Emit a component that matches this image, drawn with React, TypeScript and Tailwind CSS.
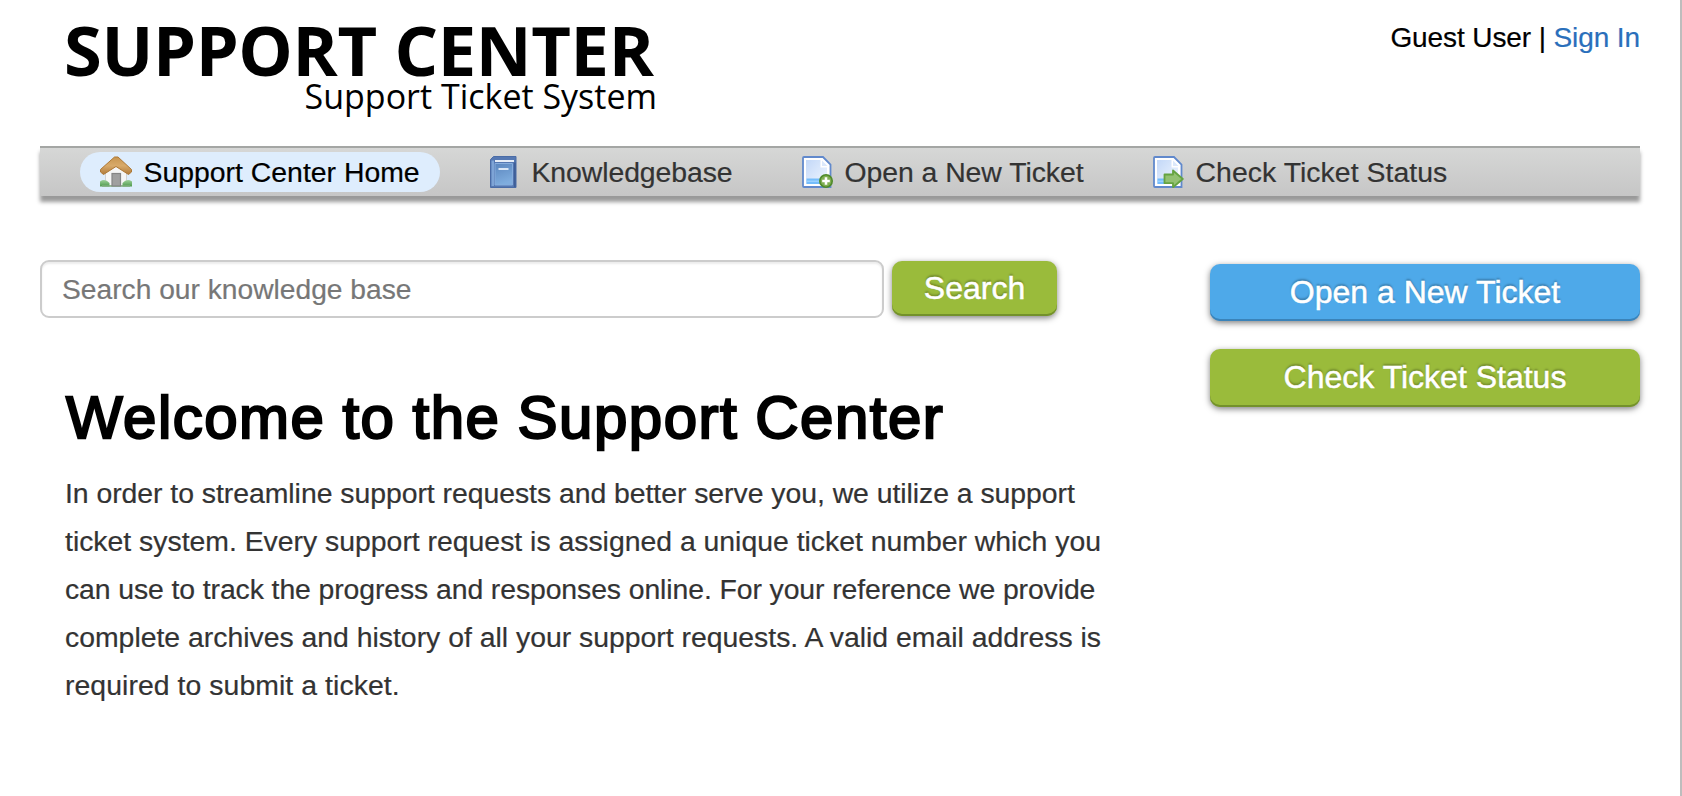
import React from "react";

function HomeIcon() {
  return (
    <svg viewBox="0 0 32 32" className="size-8 shrink-0">
      <defs>
        <linearGradient id="roof" x1="0" y1="0" x2="0" y2="1">
          <stop offset="0" stopColor="#c8954f" />
          <stop offset="0.5" stopColor="#d8aa6a" />
          <stop offset="1" stopColor="#b07a3a" />
        </linearGradient>
        <linearGradient id="grass" x1="0" y1="0" x2="0" y2="1">
          <stop offset="0" stopColor="#9bcf97" />
          <stop offset="1" stopColor="#4f9a4d" />
        </linearGradient>
      </defs>
      <path d="M5.500 15.500L16 7l10.500 8.500v14h-21z" fill="#f6f6f6" stroke="#d2d2d2" strokeWidth="1" />
      <path d="M0 25.500q5-3.500 9.500 1.500v3.500H0zM32 25.500q-5-3.500-9.500 1.500v3.500H32z" fill="url(#grass)" />
      <path d="M2 30h28" stroke="#7fae7c" strokeWidth="1.500" />
      <rect x="12" y="17.500" width="8.500" height="12.500" fill="#a0a0a0" stroke="#858585" strokeWidth="1.200" />
      <path d="M14.500 1h3.500L31.500 13.500v2.500l-3 2.500L16 10.500 3.500 18.500l-3-2.500v-2.500z" fill="url(#roof)" stroke="#ad7836" strokeWidth="1" strokeLinejoin="round" />
    </svg>
  );
}

function BookIcon() {
  return (
    <svg viewBox="0 0 32 32" className="size-8 shrink-0">
      <defs>
        <linearGradient id="cover" x1="0" y1="0" x2="0.300" y2="1">
          <stop offset="0" stopColor="#5b86be" />
          <stop offset="1" stopColor="#7fadde" />
        </linearGradient>
      </defs>
      <path d="M5.500 0.500H28v31H2.500V3.500z" fill="#5578b2" stroke="#4a6ca6" strokeWidth="1" />
      <path d="M3.500 4.500h2.500v25.500H3.500z" fill="#7ea4d6" />
      <path d="M7 4h19v2H7z" fill="#e6edf7" />
      <path d="M7 7.500h17.500v21.500H7z" fill="url(#cover)" stroke="#86acdc" strokeWidth="1" />
      <path d="M10.500 12h10v2h-10z" fill="#dbe7f6" />
      <path d="M26.800 6.500v24.500" stroke="#3f5f98" strokeWidth="1.800" />
    </svg>
  );
}

function PageShape({ id }: { id: string }) {
  return (
    <>
      <defs>
        <linearGradient id={id} x1="0" y1="0" x2="1" y2="1">
          <stop offset="0" stopColor="#c3d8f8" />
          <stop offset="1" stopColor="#f0f6ff" />
        </linearGradient>
      </defs>
      <path d="M3 1h19l7.500 7.500V31H3q-1 0-1-1V2q0-1 1-1z" fill="#fff" stroke="#6189cc" strokeWidth="1.800" />
      <path d="M5 4h14.500v7.500H26v16.500H5z" fill={`url(#${id})`} />
      <path d="M21 4.500l5.500 5.500H21z" fill="#dbe8fb" />
      <path d="M5.500 22.500H24v5.500H5.500z" fill="#74bdfb" />
      <path d="M5.500 25.200H24" stroke="#a5d6ff" strokeWidth="1.200" />
    </>
  );
}

function NewTicketIcon() {
  return (
    <svg viewBox="0 0 32 32" className="size-8 shrink-0">
      <PageShape id="pageNew" />
      <circle cx="25" cy="25" r="6.200" fill="#7fae52" stroke="#4f8a2a" strokeWidth="1.600" />
      <path d="M25 21.200v7.600M21.200 25h7.600" stroke="#fff" strokeWidth="2.600" />
    </svg>
  );
}

function StatusIcon() {
  return (
    <svg viewBox="0 0 32 32" className="size-8 shrink-0">
      <PageShape id="pageStatus" />
      <path d="M12.500 18.500H21v-4l9.800 8.500L21 31.200v-4h-8.500z" fill="#93c172" stroke="#65a341" strokeWidth="1.800" strokeLinejoin="round" />
    </svg>
  );
}

const navItem =
  "flex h-10 items-center gap-[11.5px] rounded-full px-5 whitespace-nowrap text-[28.4px] leading-10";
const button =
  "flex items-center justify-center rounded-[10px] pb-0.5 text-[32px] text-white [text-shadow:0_-2px_2px_rgba(0,0,0,0.25)] [-webkit-text-stroke:0.5px_white]";

export default function App() {
  return (
    <div className="h-[796px] w-[1682px] overflow-hidden border-r-2 border-[#bdbdbd] bg-white px-10 font-['Liberation_Sans',Arial,sans-serif] text-[28px] text-black [-webkit-text-stroke:0.2px_currentColor]">
      <header className="flex h-[146px] items-start justify-between">
        <div className="flex w-[617px] flex-col pt-5 pl-6 font-['Open_Sans',sans-serif] whitespace-nowrap [-webkit-text-stroke:0]">
          <span className="text-[68.6px] leading-[60px] font-bold tracking-[-0.35px]">SUPPORT CENTER</span>
          <span className="self-end text-[34px] leading-[33px]">Support Ticket System</span>
        </div>
        <p className="pt-[22px] leading-8 tracking-[-0.1px]">
          Guest User | <a className="text-[#2a6fbb]">Sign In</a>
        </p>
      </header>

      <nav className="flex h-[50px] gap-7 border-t-2 border-[#a4a6a4] bg-linear-to-b from-[#d6d7d6] to-[#c6c6c6] pt-1 pl-10 text-[#333] shadow-[0_6px_4px_rgba(0,0,0,0.4)]">
        <a className={`${navItem} w-[360px] bg-[#deedfd] text-black`}>
          <HomeIcon />
          Support Center Home
        </a>
        <a className={`${navItem} w-[285px] tracking-[-0.08px]`}>
          <BookIcon />
          Knowledgebase
        </a>
        <a className={`${navItem} w-[323px] tracking-[-0.05px]`}>
          <NewTicketIcon />
          Open a New Ticket
        </a>
        <a className={`${navItem} tracking-[0.05px]`}>
          <StatusIcon />
          Check Ticket Status
        </a>
      </nav>

      <main className="flex justify-between pt-16">
        <section className="w-[1100px]">
          <form className="flex gap-2">
            <input
              className="h-[58px] w-[844px] rounded-[9px] border-2 border-[#ccc] bg-white px-5 text-[28.2px] shadow-[inset_0_2px_2px_rgba(0,0,0,0.075)] placeholder:text-[#777]"
              placeholder="Search our knowledge base"
            />
            <button
              type="button"
              className={`${button} mt-px h-[55px] w-[165px] bg-[#9abb3b] shadow-[inset_0_-2px_0_#73912b,0_2px_6px_rgba(0,0,0,0.5)]`}
            >
              Search
            </button>
          </form>
          <h1 className="mt-[70px] pl-[26px] text-[60px] leading-[60px] tracking-[1.48px] [word-spacing:-1px] whitespace-nowrap [-webkit-text-stroke:2.3px_black]">
            Welcome to the Support Center
          </h1>
          <p className="mt-[21px] flex flex-col pl-[25px] text-[28.4px] leading-[48px] whitespace-nowrap text-[#333]">
            <span className="tracking-[-0.04px]">
              In order to streamline support requests and better serve you, we utilize a support
            </span>
            <span className="tracking-[-0.01px]">
              ticket system. Every support request is assigned a unique ticket number which you
            </span>
            <span className="tracking-[-0.1px]">
              can use to track the progress and responses online. For your reference we provide
            </span>
            <span className="tracking-[-0.01px]">
              complete archives and history of all your support requests. A valid email address is
            </span>
            <span className="tracking-[0.06px]">required to submit a ticket.</span>
          </p>
        </section>
        <aside className="flex w-[430px] flex-col gap-7 pt-1">
          <a className={`${button} h-[57px] bg-[#4ea9e9] shadow-[inset_0_-2px_0_#3a83b9,0_2px_6px_rgba(0,0,0,0.5)]`}>
            Open a New Ticket
          </a>
          <a className={`${button} h-[58px] bg-[#9abb3b] shadow-[inset_0_-2px_0_#73912b,0_2px_6px_rgba(0,0,0,0.5)]`}>
            Check Ticket Status
          </a>
        </aside>
      </main>
    </div>
  );
}
